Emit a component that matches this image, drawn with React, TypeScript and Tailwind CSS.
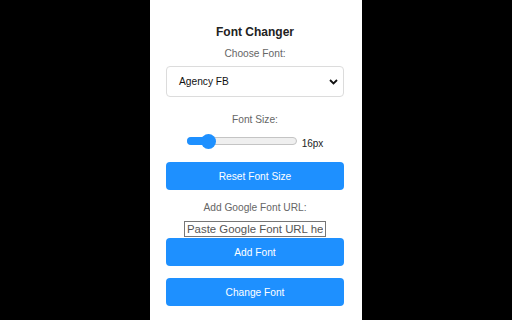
export default function App() {
  return (
    <div className="w-[512px] h-[320px] bg-black flex justify-center overflow-hidden" style={{ fontFamily: '"Liberation Sans", Arial, sans-serif' }}>
      <div className="w-[212px] h-full bg-white flex flex-col items-stretch pl-4 pr-[18px] pt-[24px]">
        <h1 className="text-[12px] leading-[16px] font-bold text-[#222] text-center">Font Changer</h1>
        <p className="mt-[7px] text-[10.2px] leading-[14px] text-[#666] text-center">Choose Font:</p>
        <div className="mt-[5px] h-[31px] rounded-[4px] border border-[#dcdcdc] flex items-center justify-between pl-[12px] pr-[5px]">
          <span className="text-[10.2px] text-[#111]">Agency FB</span>
          <svg width="9" height="6" viewBox="0 0 9 6" fill="none">
            <path d="M1 1l3.5 3.5L8 1" stroke="#111" strokeWidth="1.8" />
          </svg>
        </div>
        <p className="mt-[16px] text-[10.2px] leading-[14px] text-[#666] text-center">Font Size:</p>
        <div className="mt-[6px] h-[16px] flex items-center justify-center gap-[5px]">
          <div className="relative w-[110px] h-[8px] rounded-full bg-[#efefef] border border-[#c4c4c4]">
            <div className="absolute left-[-1px] top-[-1px] h-[8px] w-[21px] rounded-full bg-[#1e90ff]" />
            <div className="absolute left-[13px] top-[-4.5px] w-[15px] h-[15px] rounded-full bg-[#1e90ff]" />
          </div>
          <span className="text-[10px] text-[#222] mt-[4px]">16px</span>
        </div>
        <button className="mt-[13px] h-[28px] pt-[1px] rounded-[4px] bg-[#1e90ff] text-white text-[10.2px]">Reset Font Size</button>
        <p className="mt-[11px] text-[10.2px] leading-[14px] text-[#666] text-center">Add Google Font URL:</p>
        <div className="mt-[6px] flex justify-center">
          <input
            readOnly
            placeholder="Paste Google Font URL here"
            className="w-[142px] h-[16px] border border-[#767676] px-[2px] text-[11.4px] leading-[14px] placeholder:text-[#555] outline-none"
            style={{ fontFamily: '"Liberation Sans", Arial, sans-serif' }}
          />
        </div>
        <button className="mt-[1px] h-[28px] pt-[1px] rounded-[4px] bg-[#1e90ff] text-white text-[10.2px]">Add Font</button>
        <button className="mt-[12px] h-[28px] pt-[1px] rounded-[4px] bg-[#1e90ff] text-white text-[10.2px]">Change Font</button>
      </div>
    </div>
  )
}
